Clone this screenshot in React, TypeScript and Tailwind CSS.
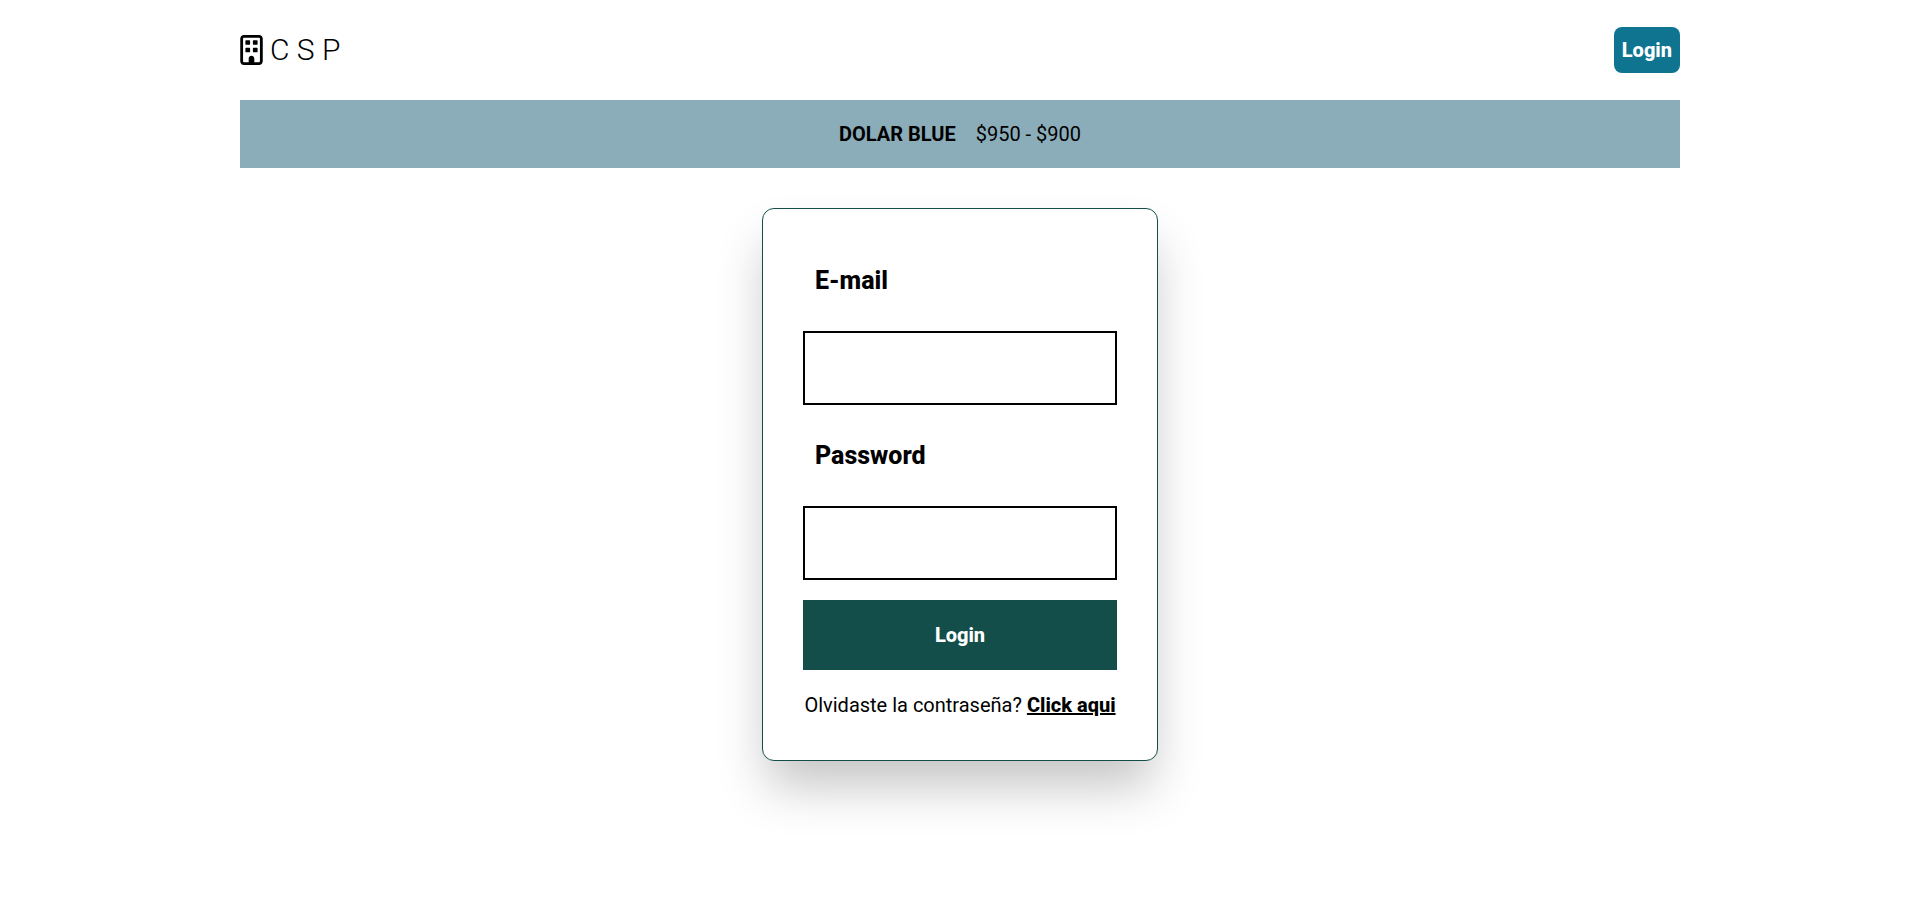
import { FaRegBuilding } from "react-icons/fa6";

function Header() {
  return (
    <header className="flex h-[100px] items-center justify-between">
      <a href="#" className="flex items-center gap-[7px] text-3xl font-light">
        <FaRegBuilding aria-hidden="true" className="h-[30px] w-[23px]" />
        <span>C S P</span>
      </a>
      <button type="button" className="h-[46px] rounded-lg bg-[#0e7490] px-2 font-extrabold text-white">
        Login
      </button>
    </header>
  );
}

function Field({ id, label, type }: { id: string; label: string; type: string }) {
  return (
    <div className="flex flex-col gap-5">
      <label htmlFor={id} className="px-3 py-[14px] text-[25px] leading-[33px] font-extrabold">
        {label}
      </label>
      <input id={id} type={type} className="h-[74px] w-full border-2 border-black px-4" />
    </div>
  );
}

export default function App() {
  return (
    <div className="mx-auto w-3/4 pb-20 font-['Roboto',sans-serif] text-[20px] leading-[30px] text-black">
      <Header />
      <section className="flex h-[68px] items-center justify-center gap-5 bg-[#8badb9]">
        <strong className="font-bold">DOLAR BLUE</strong>
        <span>$950 - $900</span>
      </section>
      <main className="mt-10 flex justify-center">
        <form className="flex w-[396px] flex-col gap-5 rounded-xl border border-[#134e4a] bg-white px-10 pt-[41px] pb-10 shadow-[0_30px_50px_-5px_rgba(0,0,0,0.23)]">
          <Field id="email" label="E-mail" type="email" />
          <Field id="password" label="Password" type="password" />
          <button type="button" className="h-[70px] w-full bg-[#134e4a] font-extrabold text-white">
            Login
          </button>
          <p className="text-center">
            Olvidaste la contraseña?{" "}
            <a href="#" className="font-extrabold underline">
              Click aqui
            </a>
          </p>
        </form>
      </main>
    </div>
  );
}
